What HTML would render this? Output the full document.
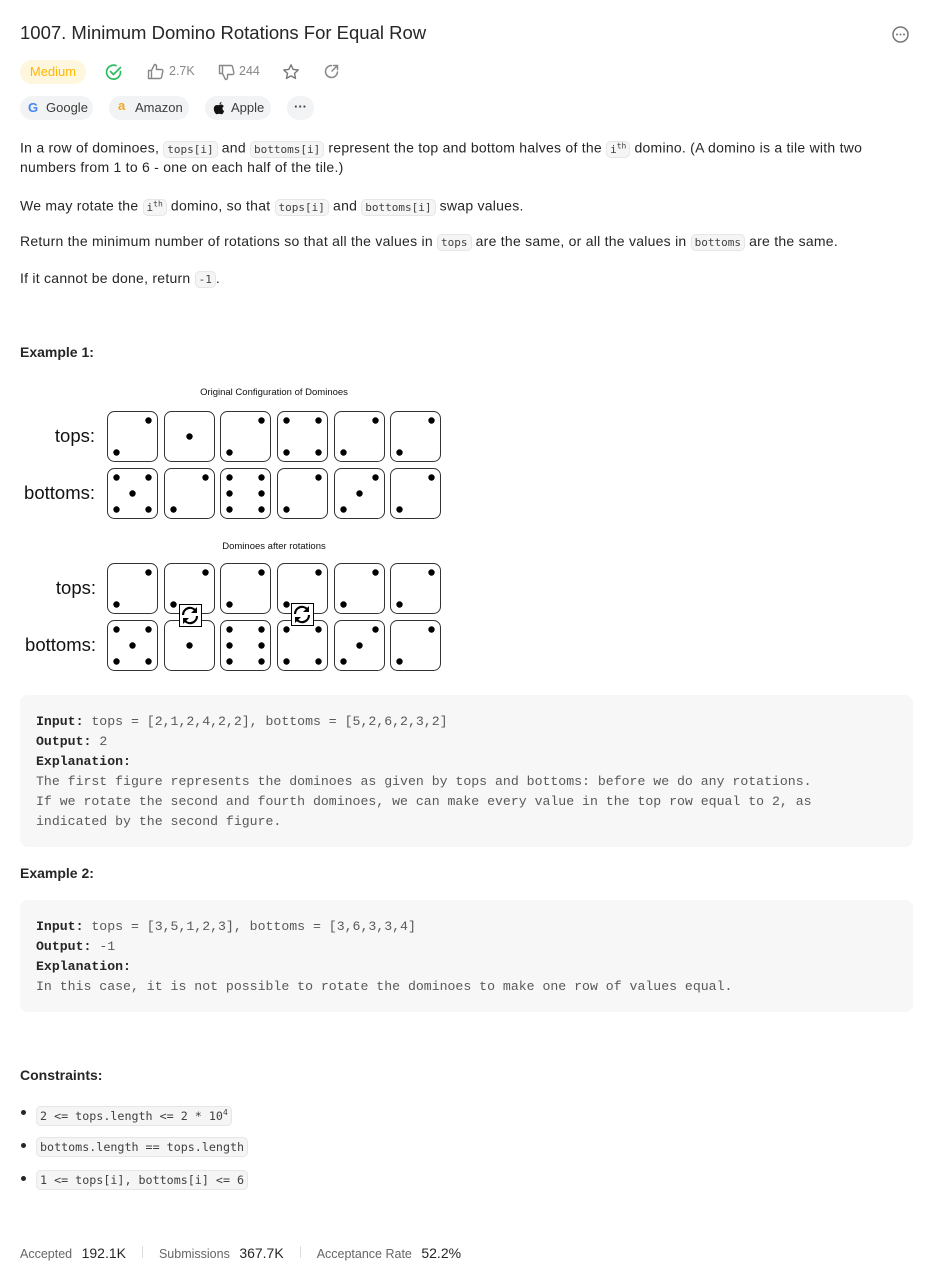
<!DOCTYPE html>
<html><head><meta charset="utf-8"><style>
*{margin:0;padding:0;box-sizing:border-box}
body{width:933px;height:1277px;background:#fff;position:relative;font-family:"Liberation Sans","DejaVu Sans",sans-serif;color:#262626;overflow:hidden}
.a{position:absolute;white-space:nowrap}
.p{font-size:14px;line-height:22px;color:#262626;letter-spacing:.25px}
code{font-family:"DejaVu Sans Mono","Liberation Mono",monospace;font-size:11px;letter-spacing:0;background:#f5f5f5;border:1px solid #e6e6e6;border-radius:5px;padding:1px 3px;color:#404040}
.c2 code{font-size:11.7px;padding:2px 3px}
.pill{position:absolute;height:24px;border-radius:12px;background:#f2f3f4;font-size:13px;line-height:24px;color:#3c3c3c;padding:0 10px}
.pre{position:absolute;left:20px;width:893px;background:#f7f7f8;border-radius:8px;font-family:"Liberation Mono","DejaVu Sans Mono",monospace;font-size:13.2px;line-height:20px;color:#595959;padding:17px 16px 15px;white-space:pre}
.pre b{color:#262626}
h4{position:absolute;left:20px;font-size:14px;font-weight:bold;color:#262626}
.icon{position:absolute}
.dot{position:absolute;left:21px;width:5px;height:5px;border-radius:50%;background:#262626}
</style></head><body>
<div class="a" style="left:20px;top:22px;font-size:18.5px;color:#262626">1007. Minimum Domino Rotations For Equal Row</div>
<svg class="icon" style="left:891px;top:25px" width="19" height="19" viewBox="0 0 19 19"><circle cx="9.5" cy="9.5" r="7.5" fill="none" stroke="#777" stroke-width="1.5"/><circle cx="6" cy="9.5" r="1" fill="#777"/><circle cx="9.5" cy="9.5" r="1" fill="#777"/><circle cx="13" cy="9.5" r="1" fill="#777"/></svg>

<div class="pill" style="left:20px;top:60px;background:#fef6dd;color:#ffb800;width:66px;text-align:center;padding:0">Medium</div>
<svg class="icon" style="left:105px;top:63px" width="18" height="18" viewBox="0 0 18 18"><path d="M15.5 8.5A7 7 0 1 1 11 2.6" fill="none" stroke="#2cbb5d" stroke-width="1.7" stroke-linecap="round"/><path d="M5.5 8.5l3 3 7-7" fill="none" stroke="#2cbb5d" stroke-width="1.7" stroke-linecap="round" stroke-linejoin="round"/></svg>
<svg class="icon" style="left:147px;top:63px" width="17" height="17" viewBox="0 0 17 17"><path d="M1.5 7.5h3v8h-3zM4.5 7.5l3-6c1.5 0 2 1 2 2v3h5c1 0 1.5 1 1.3 2l-1.2 5.5c-.2.8-.8 1.5-1.6 1.5H4.5" fill="none" stroke="#888" stroke-width="1.4" stroke-linejoin="round"/></svg>
<div class="a" style="left:169px;top:64px;font-size:12.5px;color:#888">2.7K</div>
<svg class="icon" style="left:218px;top:64px" width="17" height="17" viewBox="0 0 17 17"><path d="M1.5 1.5h3v8h-3zM4.5 9.5l3 6c1.5 0 2-1 2-2v-3h5c1 0 1.5-1 1.3-2l-1.2-5.5c-.2-.8-.8-1.5-1.6-1.5H4.5" fill="none" stroke="#888" stroke-width="1.4" stroke-linejoin="round"/></svg>
<div class="a" style="left:239px;top:64px;font-size:12.5px;color:#888">244</div>
<svg class="icon" style="left:282px;top:63px" width="18" height="18" viewBox="0 0 18 18"><path d="M9 1.8l2.2 4.6 5 .6-3.7 3.4 1 5-4.5-2.5-4.5 2.5 1-5L1.8 7l5-.6z" fill="none" stroke="#777" stroke-width="1.4" stroke-linejoin="round"/></svg>
<svg class="icon" style="left:323px;top:63px" width="17" height="17" viewBox="0 0 17 17"><path d="M14.5 9A6 6 0 1 1 8.5 2.5" fill="none" stroke="#888" stroke-width="1.5" stroke-linecap="round"/><path d="M9 8l5.5-5.5M10.5 2.5h4v4" fill="none" stroke="#888" stroke-width="1.5" stroke-linecap="round"/></svg>

<div class="pill" style="left:20px;top:96px;width:73px;padding-left:26px">Google</div>
<div class="a" style="left:28px;top:100px;font-size:13px;font-weight:bold;color:#4285f4">G</div>
<div class="pill" style="left:109px;top:96px;width:80px;padding-left:26px">Amazon</div>
<div class="a" style="left:118px;top:98px;font-size:13px;font-weight:bold;color:#f5a623">a</div>
<div class="pill" style="left:205px;top:96px;width:66px;padding-left:26px">Apple</div>
<svg class="icon" style="left:213px;top:101px" width="12" height="14" viewBox="0 0 12 14"><path d="M8.5 1c0 1-.8 2.2-2 2.2 0-1 .8-2.1 2-2.2zM6 4c1-.5 2-.6 3.2-.2.8.3 1.3.9 1.6 1.4-2 1.2-1.6 4 .4 4.7-.5 1.500-1.500 3.400-2.700 3.400-.9 0-1.100-.5-2.300-.5s-1.500.5-2.400.5C2.500 13.300.8 10.300.8 7.800.8 5.500 2.300 4 3.800 4c.9 0 1.500.5 2.200 0z" fill="#111"/></svg>
<div class="pill" style="left:287px;top:96px;width:27px;padding:0;text-align:center;line-height:22px;font-weight:bold">···</div>

<div class="a p" style="left:20px;top:135px">In a row of dominoes, <code>tops[i]</code> and <code>bottoms[i]</code> represent the top and bottom halves of the <code>i<sup style="font-size:8px">th</sup></code> domino. (A domino is a tile with two</div>
<div class="a p" style="left:20px;top:156px">numbers from 1 to 6 - one on each half of the tile.)</div>
<div class="a p" style="left:20px;top:193px">We may rotate the <code>i<sup style="font-size:8px">th</sup></code> domino, so that <code>tops[i]</code> and <code>bottoms[i]</code> swap values.</div>
<div class="a p" style="left:20px;top:230px">Return the minimum number of rotations so that all the values in <code>tops</code> are the same, or all the values in <code>bottoms</code> are the same.</div>
<div class="a p" style="left:20px;top:267px">If it cannot be done, return <code>-1</code>.</div>

<h4 style="top:344px">Example 1:</h4>

<svg class="icon" style="left:0;top:380px" width="460" height="300" viewBox="0 380 460 300" font-family="Liberation Sans, sans-serif">
<text x="274" y="395" font-size="9.5" text-anchor="middle" fill="#111">Original Configuration of Dominoes</text>
<text x="274" y="549" font-size="9.5" text-anchor="middle" fill="#111">Dominoes after rotations</text>
<text x="95" y="442" font-size="18.5" text-anchor="end" fill="#111">tops:</text>
<text x="95" y="499" font-size="18.5" text-anchor="end" fill="#111">bottoms:</text>
<text x="96" y="594" font-size="18.5" text-anchor="end" fill="#111">tops:</text>
<text x="96" y="651" font-size="18.5" text-anchor="end" fill="#111">bottoms:</text>
<g id="dice" fill="#000" stroke="none"></g>
</svg>
<script>
(function(){
var xs=[107,164,220,277,334,390];
var P={TL:[9,9],TR:[41,9],ML:[9,25],MR:[41,25],C:[25,25],BL:[9,41],BR:[41,41]};
var F={1:['C'],2:['TR','BL'],3:['TR','C','BL'],4:['TL','TR','BL','BR'],5:['TL','TR','C','BL','BR'],6:['TL','TR','ML','MR','BL','BR']};
var rows=[[411,[2,1,2,4,2,2]],[468,[5,2,6,2,3,2]],[563,[2,2,2,2,2,2]],[620,[5,1,6,4,3,2]]];
var g=document.getElementById('dice'),s='';
rows.forEach(function(r){r[1].forEach(function(v,i){var x=xs[i],y=r[0];
s+='<rect x="'+(x+.5)+'" y="'+(y+.5)+'" width="50" height="50" rx="7" fill="#fff" stroke="#333" stroke-width="1"/>';
F[v].forEach(function(k){s+='<circle cx="'+(x+P[k][0]+.5)+'" cy="'+(y+P[k][1]+.5)+'" r="3.2" fill="#000"/>';});});});
[[179,604],[291,603]].forEach(function(c){var x=c[0],y=c[1];
s+='<rect x="'+x+'.5" y="'+y+'.5" width="22" height="22" fill="#fff" stroke="#000"/>';
s+='<path d="M'+(x+4)+' '+(y+11)+'a7 7 0 0 1 12-5" fill="none" stroke="#000" stroke-width="2.2"/><path d="M'+(x+18)+' '+(y+3)+'v6h-6z" fill="#000"/>';
s+='<path d="M'+(x+18)+' '+(y+12)+'a7 7 0 0 1 -12 5" fill="none" stroke="#000" stroke-width="2.2"/><path d="M'+(x+4)+' '+(y+20)+'v-6h6z" fill="#000"/>';});
g.innerHTML=s;})();
</script>

<div class="pre" style="top:695px;height:152px"><b>Input:</b> tops = [2,1,2,4,2,2], bottoms = [5,2,6,2,3,2]
<b>Output:</b> 2
<b>Explanation:</b>
The first figure represents the dominoes as given by tops and bottoms: before we do any rotations.
If we rotate the second and fourth dominoes, we can make every value in the top row equal to 2, as
indicated by the second figure.</div>

<h4 style="top:865px">Example 2:</h4>
<div class="pre" style="top:900px;height:112px"><b>Input:</b> tops = [3,5,1,2,3], bottoms = [3,6,3,3,4]
<b>Output:</b> -1
<b>Explanation:</b>
In this case, it is not possible to rotate the dominoes to make one row of values equal.</div>

<h4 style="top:1067px">Constraints:</h4>
<div class="dot" style="top:1110px"></div>
<div class="a p c2" style="left:36px;top:1102px"><code>2 &lt;= tops.length &lt;= 2 * 10<sup style="font-size:8px">4</sup></code></div>
<div class="dot" style="top:1143px"></div>
<div class="a p c2" style="left:36px;top:1135px"><code>bottoms.length == tops.length</code></div>
<div class="dot" style="top:1176px"></div>
<div class="a p c2" style="left:36px;top:1168px"><code>1 &lt;= tops[i], bottoms[i] &lt;= 6</code></div>

<div class="a" style="left:20px;top:1245px;font-size:12.5px;color:#666">Accepted <span style="color:#262626;font-size:14px;margin-left:6px">192.1K</span><span style="display:inline-block;width:1px;height:12px;background:#ddd;margin:0 16px"></span>Submissions <span style="color:#262626;font-size:14px;margin-left:6px">367.7K</span><span style="display:inline-block;width:1px;height:12px;background:#ddd;margin:0 16px"></span>Acceptance Rate <span style="color:#262626;font-size:14px;margin-left:6px">52.2%</span></div>
</body></html>
